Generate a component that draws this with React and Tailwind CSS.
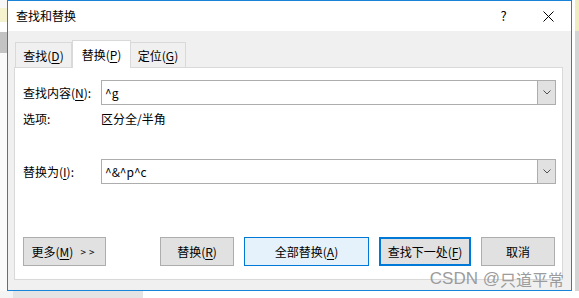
import React from 'react';

const font = { fontFamily: '"Noto Sans CJK SC", "Noto Sans", sans-serif' };

function Key({ children }) {
  return <u className="underline underline-offset-2 decoration-1">{children}</u>;
}

function ComboInput({ value }) {
  return (
    <div className="flex h-[25px] w-[455px] border border-[#adadad] bg-white">
      <div className="flex flex-1 items-center pl-[3px] text-[12px] text-black">{value}</div>
      <div className="flex w-[18px] items-center justify-center border-l border-[#adadad] bg-[#e1e1e1]">
        <svg width="8" height="5" viewBox="0 0 8 5">
          <polyline points="0.5,0.5 4,4 7.5,0.5" fill="none" stroke="#505050" strokeWidth="1" />
        </svg>
      </div>
    </div>
  );
}

function Btn({ w, variant, children }) {
  const cls =
    variant === 'primary'
      ? 'border border-[#0078d7] bg-[#e5f1fb]'
      : variant === 'focus'
      ? 'border-2 border-[#0078d7] bg-[#e1e1e1]'
      : 'border border-[#adadad] bg-[#e1e1e1]';
  return (
    <div className={`flex h-[29px] items-center justify-center text-[12px] text-black ${cls} ${w}`}>
      {children}
    </div>
  );
}

export default function App() {
  return (
    <div className="flex h-[298px] w-[579px] flex-col overflow-hidden bg-white" style={font}>
      <div className="flex h-[291px]">
        {/* desktop strip, left */}
        <div className="flex w-[7px] flex-col">
          <div className="h-[8px] bg-[#f7f7f7]" />
          <div className="h-[14px] bg-[#f4f2cf]" />
          <div className="h-[10px] bg-white" />
          <div className="h-[21px] bg-[#c3c3c3]" />
          <div className="flex-1 bg-[#fafafa]" />
        </div>

        {/* dialog */}
        <div className="relative flex w-[565px] flex-col border border-[#1883d7]">
          <div className="flex h-[30px] items-center bg-white">
            <span className="pl-[8px] text-[12px] text-black">查找和替换</span>
            <div className="ml-auto flex h-full w-[43px] items-center justify-center text-[13px] text-black">?</div>
            <div className="flex h-full w-[46px] items-center justify-center">
              <svg width="11" height="11" viewBox="0 0 11 11">
                <path d="M0.5 0.5L10.5 10.5M10.5 0.5L0.5 10.5" stroke="#000" strokeWidth="1" />
              </svg>
            </div>
          </div>

          <div className="flex flex-1 flex-col bg-[#f0f0f0] pl-[6px] pr-[8px] pt-[9px]">
            {/* tabs */}
            <div className="relative z-10 -mb-px flex h-[28px] items-end pl-px">
              <div className="mb-px flex h-[25px] w-[57px] items-center justify-center border border-b-0 border-[#d9d9d9] pt-[2px] text-[12px] text-black">
                查找(<Key>D</Key>)
              </div>
              <div className="flex h-[28px] w-[59px] items-center justify-center border border-b-0 border-[#d9d9d9] bg-white pt-px text-[12px] text-black">
                替换(<Key>P</Key>)
              </div>
              <div className="mb-px flex h-[25px] w-[55px] items-center justify-center border border-b-0 border-l-0 border-[#d9d9d9] pt-[2px] text-[12px] text-black">
                定位(<Key>G</Key>)
              </div>
            </div>

            {/* panel */}
            <div className="flex h-[213px] w-[549px] flex-col border border-[#d9d9d9] bg-white pl-[8px] pr-[6px] pt-[12px] text-[12px] text-black">
              <div className="flex items-center">
                <div className="w-[78px]">
                  查找内容(<Key>N</Key>):
                </div>
                <ComboInput value="^g" />
              </div>
              <div className="mt-[5px] flex h-[18px] items-center">
                <div className="w-[78px]">选项:</div>
                <div>区分全/半角</div>
              </div>
              <div className="mt-[31px] flex items-center">
                <div className="w-[78px]">
                  替换为(<Key>I</Key>):
                </div>
                <ComboInput value="^&^p^c" />
              </div>
              <div className="mt-[53px] flex items-center">
                <Btn w="w-[83px]">
                  更多(<Key>M</Key>)<span className="ml-[7px] text-[10px] tracking-[3px]">&gt;&gt;</span>
                </Btn>
                <div className="ml-[54px] flex gap-[10px]">
                  <Btn w="w-[74px]">
                    替换(<Key>R</Key>)
                  </Btn>
                  <Btn w="w-[125px]" variant="primary">
                    全部替换(<Key>A</Key>)
                  </Btn>
                  <Btn w="w-[92px]" variant="focus">
                    查找下一处(<Key>F</Key>)
                  </Btn>
                  <Btn w="w-[74px]">取消</Btn>
                </div>
              </div>
            </div>
          </div>

          <div className="absolute right-[7px] top-[268px] flex items-center whitespace-nowrap text-base leading-[20px] text-[#9c9c9c]">
            <span className="font-['Liberation_Sans',sans-serif] text-[17px]">CSDN @</span>
            <span className="text-[16px]">只道平常</span>
          </div>
        </div>

        {/* desktop strip, right */}
        <div className="flex flex-1">
          <div className="w-[3px] bg-white" />
          <div className="flex flex-1 flex-col">
            <div className="h-[31px] bg-[#eeecc0]" />
            <div className="flex-1 bg-[#d4d4d4]" />
          </div>
        </div>
      </div>

      <div className="flex h-[7px]">
        <div className="w-[13px] bg-[#f4f4f4]" />
        <div className="w-[130px] bg-[#e4e4e4]" />
        <div className="flex-1 bg-white" />
      </div>
    </div>
  );
}
